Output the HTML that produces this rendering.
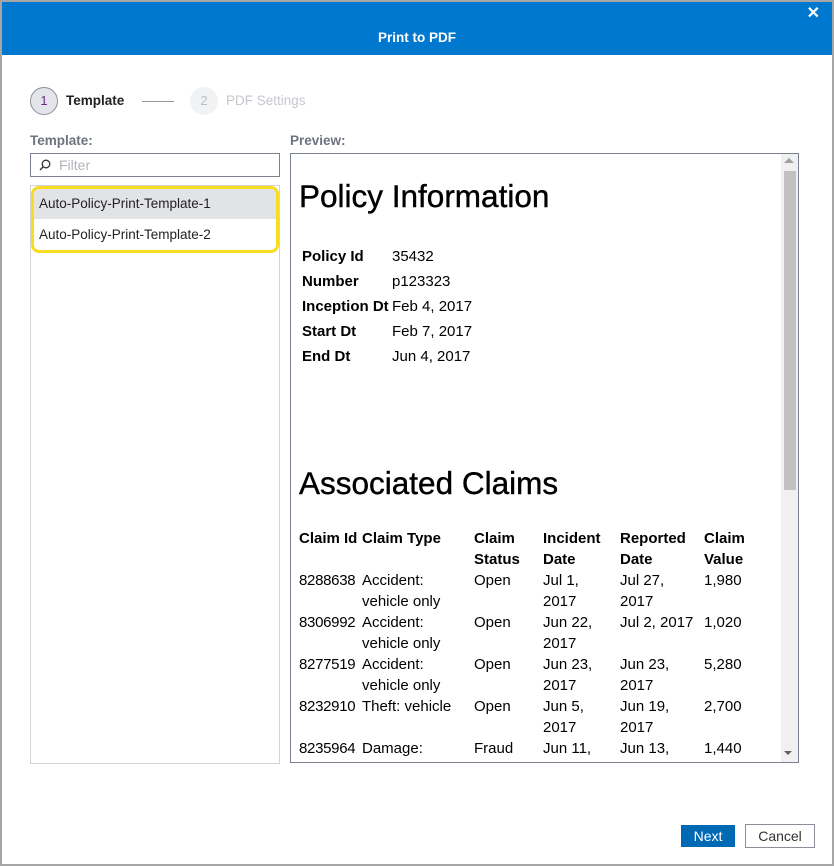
<!DOCTYPE html>
<html><head><style>
*{margin:0;padding:0;box-sizing:border-box}
body{width:834px;height:866px;overflow:hidden;background:#a6a6a6;font-family:"Liberation Sans",Arial,sans-serif;position:relative}
.dlg{position:absolute;left:2px;top:2px;width:830px;height:862px;background:#fff}
.hd{position:absolute;left:0;top:0;width:830px;height:53px;background:#0078cf;color:#fff;font-weight:bold;font-size:13.5px;text-align:center;line-height:72px}
.x{position:absolute;right:12px;top:2px;font-size:16px;line-height:20px;font-weight:bold}
.a{position:absolute;white-space:nowrap}
.p{font-size:15px;color:#000;line-height:21px}
.b{font-weight:bold}
.h{font-size:31.5px;color:#000;-webkit-text-stroke:0.4px #000}
</style></head><body>
<div class="dlg">
<div class="hd">Print to PDF<span class="x">✕</span></div>
</div>
<div class="a" style="left:30px;top:87px;width:28px;height:28px;border-radius:50%;background:#e4e5ea;border:1px solid #8a8f99;text-align:center;line-height:26px;font-size:13px;color:#6b2a8a">1</div>
<div class="a" style="left:66px;top:93px;font-size:13.5px;font-weight:bold;color:#222">Template</div>
<div class="a" style="left:142px;top:101px;width:32px;height:1px;background:#999"></div>
<div class="a" style="left:190px;top:87px;width:28px;height:28px;border-radius:50%;background:#f1f2f4;text-align:center;line-height:28px;font-size:13px;color:#b8bcc4">2</div>
<div class="a" style="left:226px;top:93px;font-size:13.5px;color:#c4c7cc">PDF Settings</div>
<div class="a" style="left:30px;top:133px;font-size:13.5px;font-weight:bold;color:#6d7380">Template:</div>
<div class="a" style="left:30px;top:153px;width:250px;height:24px;border:1px solid #7a8290;background:#fff">
<svg style="position:absolute;left:8px;top:5px" width="12" height="12" viewBox="0 0 12 12"><circle cx="7" cy="5" r="3.8" fill="none" stroke="#333" stroke-width="1.3"/><line x1="4.2" y1="7.8" x2="1" y2="11" stroke="#333" stroke-width="1.4"/></svg>
<span style="position:absolute;left:28px;top:3px;font-size:14px;color:#b0b4ba">Filter</span></div>
<div class="a" style="left:30px;top:185px;width:250px;height:579px;border:1px solid #d0d3d8;background:#fff"></div>
<div class="a" style="left:31px;top:186px;width:248px;height:67px;border:3px solid #f7dc1f;border-radius:8px;overflow:hidden;background:#fff">
<div style="height:30px;background:#e2e3e6;font-size:13.5px;color:#222;line-height:30px;padding-left:5px">Auto-Policy-Print-Template-1</div>
<div style="height:32px;font-size:13.5px;color:#222;line-height:32px;padding-left:5px">Auto-Policy-Print-Template-2</div>
</div>
<div class="a" style="left:290px;top:133px;font-size:13.5px;font-weight:bold;color:#6d7380">Preview:</div>
<div class="a" style="left:290px;top:153px;width:509px;height:610px;border:1px solid #7a8290;background:#fff;overflow:hidden">
<div class="a" style="left:490px;top:0;width:17px;height:608px;background:#f0f0f0"></div>
<div class="a" style="left:493px;top:17px;width:12px;height:319px;background:#c1c1c1"></div>
<div class="a" style="left:493px;top:4px;width:0;height:0;border-left:5px solid transparent;border-right:5px solid transparent;border-bottom:5px solid #a0a0a0"></div>
<div class="a" style="left:493px;top:597px;width:0;height:0;border-left:4px solid transparent;border-right:4px solid transparent;border-top:4px solid #606060"></div>
</div>
<div class="a h" style="left:299px;top:178px">Policy Information</div>
<div class="a p b" style="left:302px;top:244px;line-height:25px">Policy Id<br>Number<br>Inception Dt<br>Start Dt<br>End Dt</div>
<div class="a p" style="left:392px;top:244px;line-height:25px">35432<br>p123323<br>Feb 4, 2017<br>Feb 7, 2017<br>Jun 4, 2017</div>
<div class="a h" style="left:299px;top:465px">Associated Claims</div>
<div class="a p b" style="left:299px;top:528px">Claim Id</div>
<div class="a p b" style="left:362px;top:528px">Claim Type</div>
<div class="a p b" style="left:474px;top:528px">Claim<br>Status</div>
<div class="a p b" style="left:543px;top:528px">Incident<br>Date</div>
<div class="a p b" style="left:620px;top:528px">Reported<br>Date</div>
<div class="a p b" style="left:704px;top:528px">Claim<br>Value</div>
<div class="a p" style="left:299px;top:570px;letter-spacing:-0.3px">8288638<br><br>8306992<br><br>8277519<br><br>8232910<br><br>8235964</div>
<div class="a p" style="left:362px;top:570px">Accident:<br>vehicle only<br>Accident:<br>vehicle only<br>Accident:<br>vehicle only<br>Theft: vehicle<br><br>Damage:</div>
<div class="a p" style="left:474px;top:570px">Open<br><br>Open<br><br>Open<br><br>Open<br><br>Fraud</div>
<div class="a p" style="left:543px;top:570px">Jul 1,<br>2017<br>Jun 22,<br>2017<br>Jun 23,<br>2017<br>Jun 5,<br>2017<br>Jun 11,</div>
<div class="a p" style="left:620px;top:570px">Jul 27,<br>2017<br>Jul 2, 2017<br><br>Jun 23,<br>2017<br>Jun 19,<br>2017<br>Jun 13,</div>
<div class="a p" style="left:704px;top:570px">1,980<br><br>1,020<br><br>5,280<br><br>2,700<br><br>1,440</div>
<div class="a" style="left:291px;top:758px;width:490px;height:4px;background:#fff"></div>
<div class="a" style="left:681px;top:825px;width:54px;height:22px;background:#0069b4;color:#fff;font-size:14px;text-align:center;line-height:22px">Next</div>
<div class="a" style="left:745px;top:824px;width:70px;height:24px;border:1px solid #8a8f99;color:#333;font-size:14px;text-align:center;line-height:22px;background:#fff">Cancel</div>
</body></html>
